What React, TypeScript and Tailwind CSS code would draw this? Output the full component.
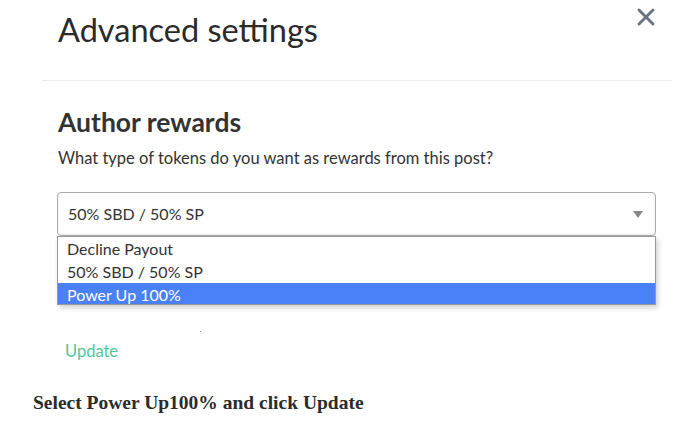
import { X } from "lucide-react";

const options = ["Decline Payout", "50% SBD / 50% SP", "Power Up 100%"];

export default function App() {
  const selected = "Power Up 100%";

  return (
    <div className="relative h-[424px] w-[682px] overflow-hidden bg-white font-['Lato',sans-serif] text-[#333]">
      <div className="flex items-start justify-between pl-[58px] pr-[22px] pt-[10px]">
        <h1 className="text-[32.5px] font-normal leading-[40px] text-[#2a2a2a]">Advanced settings</h1>
        <X className="-mt-[7px] h-[28px] w-[28px] text-[#6b7280]" strokeWidth={2.5} />
      </div>

      <div className="ml-[42px] mr-[10px] mt-[30px] border-t border-[#ececec]" />

      <div className="pl-[58px] pr-[26px] pt-[26px]">
        <h2 className="text-[26.5px] font-bold leading-[30px] text-[#333]">Author rewards</h2>
        <p className="mt-[10px] text-[16.5px] leading-[22px] text-[#333]">
          What type of tokens do you want as rewards from this post?
        </p>

        <div className="mt-[23px] -ml-px">
          <div className="flex h-[44px] items-center justify-between rounded-[4px] border border-[#aaa] bg-white pl-[10px] pr-[12px] shadow-[inset_0_-1px_2px_rgba(0,0,0,0.08)]">
            <span className="text-[16px] text-[#333]">50% SBD / 50% SP</span>
            <span className="h-0 w-0 border-x-[5px] border-t-[7px] border-x-transparent border-t-[#888]" />
          </div>
          <ul className="h-[69px] overflow-hidden border border-[#999] bg-white shadow-[2px_3px_5px_rgba(0,0,0,0.18)]">
            {options.map((o) => (
              <li
                key={o}
                className={
                  o === selected
                    ? "h-[23px] bg-[#4a80f8] pl-[9px] text-[16px] leading-[23px] text-white"
                    : "h-[23px] pl-[9px] text-[16px] leading-[23px] text-[#333]"
                }
              >
                {o}
              </li>
            ))}
          </ul>
        </div>

        <div className="ml-[142px] mt-[26px] h-px w-px bg-[#999]" />

        <button className="ml-[7px] mt-[8px] text-[16.5px] leading-[22px] text-[#4fc99a]">Update</button>
      </div>

      <p className="pl-[33px] pt-[28px] font-['Liberation_Serif',serif] text-[19.5px] font-bold leading-[24px] text-[#2b2b2b]">
        Select Power Up100% and click Update
      </p>
    </div>
  );
}
